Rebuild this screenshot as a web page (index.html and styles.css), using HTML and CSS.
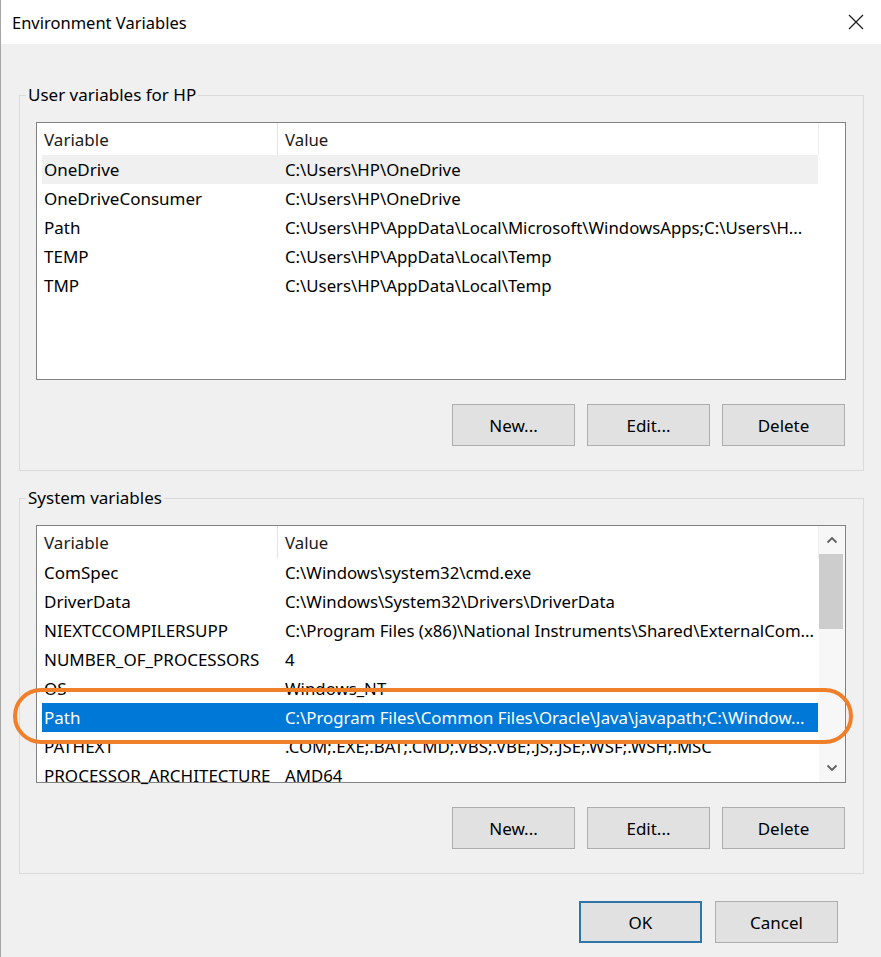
FILE: index.html
```html
<!DOCTYPE html>
<html>
<head>
<meta charset="utf-8">
<title>Environment Variables</title>
<link rel="stylesheet" href="styles.css">
</head>
<body>
<div class="window">
  <div class="titlebar">
    <span class="title">Environment Variables</span>
    <span class="close">
      <svg width="16" height="16" viewBox="0 0 16 16"><path d="M1 1 L15 15 M15 1 L1 15" stroke="#1a1a1a" stroke-width="1.2" fill="none"/></svg>
    </span>
  </div>
  <div class="content">
    <fieldset class="group">
      <legend>User variables for HP</legend>
      <div class="list">
        <div class="rows">
          <div class="row head"><div class="c1">Variable</div><div class="c2">Value</div></div>
          <div class="row hover"><div class="c1">OneDrive</div><div class="c2">C:\Users\HP\OneDrive</div></div>
          <div class="row"><div class="c1">OneDriveConsumer</div><div class="c2">C:\Users\HP\OneDrive</div></div>
          <div class="row"><div class="c1">Path</div><div class="c2">C:\Users\HP\AppData\Local\Microsoft\WindowsApps;C:\Users\H...</div></div>
          <div class="row"><div class="c1">TEMP</div><div class="c2">C:\Users\HP\AppData\Local\Temp</div></div>
          <div class="row"><div class="c1">TMP</div><div class="c2">C:\Users\HP\AppData\Local\Temp</div></div>
        </div>
      </div>
      <div class="buttons">
        <button class="btn">New...</button>
        <button class="btn">Edit...</button>
        <button class="btn">Delete</button>
      </div>
    </fieldset>

    <fieldset class="group sys">
      <legend>System variables</legend>
      <div class="list">
        <div class="rows">
          <div class="row head"><div class="c1">Variable</div><div class="c2">Value</div></div>
          <div class="row"><div class="c1">ComSpec</div><div class="c2">C:\Windows\system32\cmd.exe</div></div>
          <div class="row"><div class="c1">DriverData</div><div class="c2">C:\Windows\System32\Drivers\DriverData</div></div>
          <div class="row"><div class="c1">NIEXTCCOMPILERSUPP</div><div class="c2">C:\Program Files (x86)\National Instruments\Shared\ExternalCom...</div></div>
          <div class="row"><div class="c1">NUMBER_OF_PROCESSORS</div><div class="c2">4</div></div>
          <div class="row"><div class="c1">OS</div><div class="c2">Windows_NT</div></div>
          <div class="row selected"><div class="c1">Path</div><div class="c2">C:\Program Files\Common Files\Oracle\Java\javapath;C:\Window...</div></div>
          <div class="row"><div class="c1">PATHEXT</div><div class="c2">.COM;.EXE;.BAT;.CMD;.VBS;.VBE;.JS;.JSE;.WSF;.WSH;.MSC</div></div>
          <div class="row"><div class="c1">PROCESSOR_ARCHITECTURE</div><div class="c2">AMD64</div></div>
        </div>
        <div class="scrollbar">
          <div class="arrow">
            <svg width="12" height="8" viewBox="0 0 12 8"><path d="M1.5 6.5 L6 2 L10.5 6.5" stroke="#606060" stroke-width="1.8" fill="none"/></svg>
          </div>
          <div class="track"><div class="thumb"></div></div>
          <div class="arrow">
            <svg width="12" height="8" viewBox="0 0 12 8"><path d="M1.5 1.5 L6 6 L10.5 1.5" stroke="#606060" stroke-width="1.8" fill="none"/></svg>
          </div>
        </div>
      </div>
      <div class="buttons">
        <button class="btn">New...</button>
        <button class="btn">Edit...</button>
        <button class="btn">Delete</button>
      </div>
    </fieldset>

    <div class="footer">
      <button class="btn default">OK</button>
      <button class="btn">Cancel</button>
    </div>
  </div>
  <div class="highlight"></div>
</div>
</body>
</html>
```

FILE: styles.css
```css
html, body {
  margin: 0;
  padding: 0;
  background: #f0f0f0;
}
body {
  font-family: "Noto Sans", "Open Sans", sans-serif;
  font-size: 17px;
  color: #000;
}
.window {
  position: relative;
  width: 881px;
  height: 957px;
  box-sizing: border-box;
  border-left: 1px solid #a6a6a6;
  background: #f0f0f0;
  overflow: hidden;
}
.titlebar {
  height: 44px;
  background: #ffffff;
  display: flex;
  align-items: center;
  justify-content: space-between;
  padding: 0 17px 0 11px;
}
.title {
  font-size: 16.5px;
  color: #000;
}
.close {
  display: flex;
  width: 16px;
  height: 16px;
}
.content {
  padding: 0 16px 0 18px;
}
.group {
  margin: 40px 0 0 0;
  width: 845px;
  box-sizing: border-box;
  border: 1px solid #dadada;
  padding: 16px 17px 24px 16px;
  min-width: 0;
}
.group.sys {
  margin-top: 16px;
}
.group legend {
  margin-left: -10px;
  padding: 0 2px;
  line-height: 22px;
  color: #000;
}
.list {
  height: 258px;
  box-sizing: border-box;
  border: 1px solid #828282;
  background: #fff;
  display: flex;
}
.rows {
  flex: 1;
  padding-left: 5px;
  min-width: 0;
}
.row {
  display: flex;
  height: 29px;
  align-items: center;
  width: 776px;
  white-space: nowrap;
}
.row.head {
  height: 32px;
  box-shadow: 1px 0 0 #ededed;
}
.row.head .c1 {
  border-right: 1px solid #e5e5e5;
  height: 100%;
  display: flex;
  align-items: center;
  box-sizing: border-box;
}
.row .c1 {
  width: 236px;
  flex: none;
  padding-left: 2px;
  box-sizing: border-box;
  overflow: hidden;
}
.row .c2 {
  flex: 1;
  padding-left: 7px;
  font-size: 16.8px;
  overflow: hidden;
}
.row.hover {
  background: #f0f0f0;
}
.row.selected {
  background: #0078d7;
  color: #fff;
}
.head {
  color: #1a1a1a;
}
.scrollbar {
  width: 26px;
  flex: none;
  display: flex;
  flex-direction: column;
  background: #f7f7f7;
}
.arrow {
  height: 28px;
  display: flex;
  align-items: center;
  justify-content: center;
  flex: none;
}
.track {
  flex: 1;
  padding: 0 2px 0 0;
}
.thumb {
  height: 75px;
  background: #cdcdcd;
}
.buttons {
  display: flex;
  justify-content: flex-end;
  gap: 12px;
  margin-top: 24px;
  padding-right: 1px;
}
.btn {
  width: 123px;
  height: 42px;
  box-sizing: border-box;
  background: #e1e1e1;
  border: 1px solid #adadad;
  font-family: inherit;
  font-size: 17px;
  color: #000;
  padding: 0;
  border-radius: 0;
}
.btn.default {
  border: 2px solid #2f75a8;
}
.footer {
  display: flex;
  justify-content: flex-end;
  gap: 13px;
  margin-top: 27px;
  padding-right: 27px;
}
.highlight {
  position: absolute;
  left: 12px;
  top: 688px;
  width: 840px;
  height: 56px;
  box-sizing: border-box;
  border: 4px solid #f07f2a;
  border-radius: 28px;
}
```
